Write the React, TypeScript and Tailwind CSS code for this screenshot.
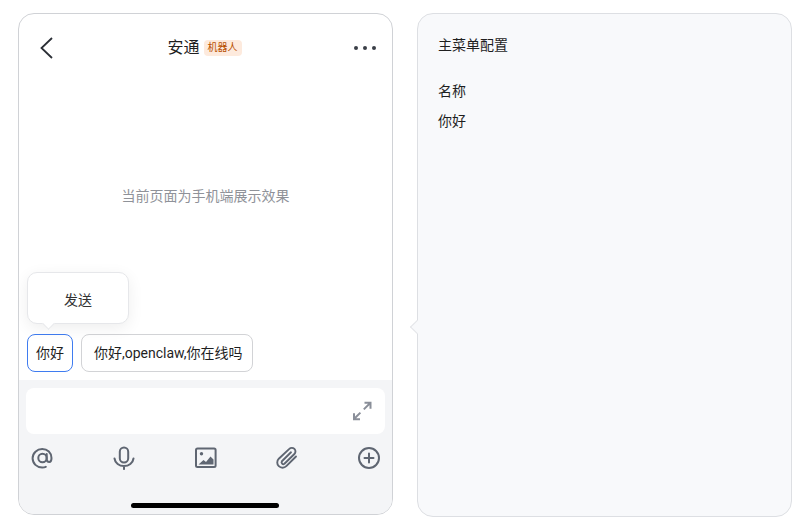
import React from "react";

function AtIcon() {
  return (
    <svg width="24" height="24" viewBox="0 0 24 24" fill="none" stroke="#5f6672" strokeWidth="2" strokeLinecap="round">
      <circle cx="12.5" cy="12" r="4.2" />
      <path d="M16.7 8v5.2c0 1.8 1.2 2.8 2.6 2.8 1.5 0 2.2-1.6 2.2-4 0-5.2-4-9-9.3-9C7 3 2.600 7 2.600 12.300c0 5.200 4.200 9.200 9.600 9.200 1.300 0 2.600-.2 3.600-.7" />
    </svg>
  );
}
function MicIcon() {
  return (
    <svg width="24" height="24" viewBox="0 0 24 24" fill="none" stroke="#5f6672" strokeWidth="2" strokeLinecap="round">
      <rect x="7.800" y="1.500" width="8.400" height="15" rx="4.200" />
      <path d="M2.500 12.500c.6 4.600 4.600 7.600 9.500 7.600s8.900-3 9.500-7.600M12 20.100v3" />
    </svg>
  );
}
function ImageIcon() {
  return (
    <svg width="24" height="24" viewBox="0 0 24 24" fill="none">
      <rect x="2" y="2.500" width="19.600" height="18.600" rx="1.500" stroke="#5f6672" strokeWidth="2" />
      <circle cx="7.500" cy="7.800" r="1.700" fill="#5f6672" />
      <path d="M4.500 18.500l5-4.500 2.500 2 4.500-5.500 3 3v5z" fill="#5f6672" />
    </svg>
  );
}
function ClipIcon() {
  return (
    <svg width="24" height="24" viewBox="0 0 24 24" fill="none" stroke="#5f6672" strokeWidth="1.900" strokeLinecap="round" strokeLinejoin="round">
      <path d="M21 10.500 L11.300 20.200 a5.300 5.300 0 0 1-7.500-7.500 L14.300 2.900 a3.600 3.600 0 0 1 5.100 5.100 L9.400 17.800 a1.800 1.800 0 0 1-2.500-2.500 L16 6.300" />
    </svg>
  );
}
function PlusIcon() {
  return (
    <svg width="24" height="24" viewBox="0 0 24 24" fill="none" stroke="#5f6672" strokeWidth="2" strokeLinecap="round">
      <circle cx="12" cy="12" r="10" />
      <path d="M12 7.500v9M7.500 12h9" />
    </svg>
  );
}
function ExpandIcon() {
  return (
    <svg width="20" height="20" viewBox="0 0 20 20" fill="none" stroke="#8a8f99" strokeWidth="2">
      <path d="M12.500 1.800h6v6M18.200 2l-6.400 6.400M8 18.200H2v-6M2 18l6.400-6.400" />
    </svg>
  );
}

export default function App() {
  return (
    <div className="w-[804px] h-[522px] bg-white flex items-start gap-6 pl-[18px] pt-[13px] text-[14px] text-[#1f1f1f] overflow-hidden font-['Roboto','Noto_Sans_CJK_SC',sans-serif]">
      <div className="relative w-[375px] h-[502px] rounded-2xl border border-[#d0d2d6] bg-white flex flex-col overflow-hidden">
        <header className="h-[68px] shrink-0 flex items-center justify-between pl-[19px] pr-[16px]">
          <svg width="18" height="24" viewBox="0 0 18 24" fill="none" stroke="#2b2f36" strokeWidth="1.800">
            <path d="M14 2 3.500 12 14 22" />
          </svg>
          <div className="flex items-center gap-[4px] -ml-[1px]">
            <span className="text-[16px] leading-6">安通</span>
            <span className="h-[16px] w-[38px] text-center rounded-[4px] bg-[#fdeadd] text-[#b84f00] text-[10px] leading-[16px]">机器人</span>
          </div>
          <div className="flex gap-[5px]">
            <i className="w-[4px] h-[4px] rounded-full bg-[#3a3f47]" />
            <i className="w-[4px] h-[4px] rounded-full bg-[#3a3f47]" />
            <i className="w-[4px] h-[4px] rounded-full bg-[#3a3f47]" />
          </div>
        </header>

        <div className="flex-1 flex items-center justify-center pb-[24px] text-[#8f9299]">当前页面为手机端展示效果</div>

        <div className="absolute left-[8px] top-[258px] w-[102px] h-[52px] rounded-[10px] border border-[#e6e7ea] bg-white shadow-[0_4px_16px_rgba(0,0,0,0.07)] flex items-center justify-center pt-[4px] text-[#333]">
          发送
          <span className="absolute left-[16px] -bottom-[5px] w-[9px] h-[9px] rotate-45 bg-white border-r border-b border-[#e6e7ea]" />
        </div>

        <div className="flex items-center gap-2 pl-[8px] pb-[8px]">
          <div className="h-[38px] w-[46px] rounded-lg border border-[#3f7cf0] flex items-center justify-center">你好</div>
          <div className="h-[38px] w-[172px] rounded-lg border border-[#d2d3d6] flex items-center pl-[12px] whitespace-nowrap">你好,openclaw,你在线吗</div>
        </div>

        <footer className="relative h-[134px] shrink-0 bg-[#f4f5f7] px-[7px] pt-[8px]">
          <div className="h-[46px] rounded-lg bg-white flex items-center justify-end pr-[13px]">
            <ExpandIcon />
          </div>
          <div className="flex justify-between mt-[12px] pl-[4px] pr-[4px]">
            <AtIcon />
            <MicIcon />
            <ImageIcon />
            <ClipIcon />
            <PlusIcon />
          </div>
          <div className="absolute left-[112px] bottom-[6px] w-[148px] h-[5px] rounded-full bg-black" />
        </footer>
      </div>

      <div className="relative w-[375px] h-[504px] rounded-2xl border border-[#dddfe3] bg-[#f8f9fb] pl-[20px] pt-[21px]">
        <span className="absolute -left-[6px] top-[308px] w-[10px] h-[10px] rotate-45 bg-[#f8f9fb] border-l border-b border-[#e4e5e8]" />
        <div className="leading-5">主菜单配置</div>
        <div className="leading-5 mt-[26px]">名称</div>
        <div className="leading-5 mt-[10px]">你好</div>
      </div>
    </div>
  );
}
